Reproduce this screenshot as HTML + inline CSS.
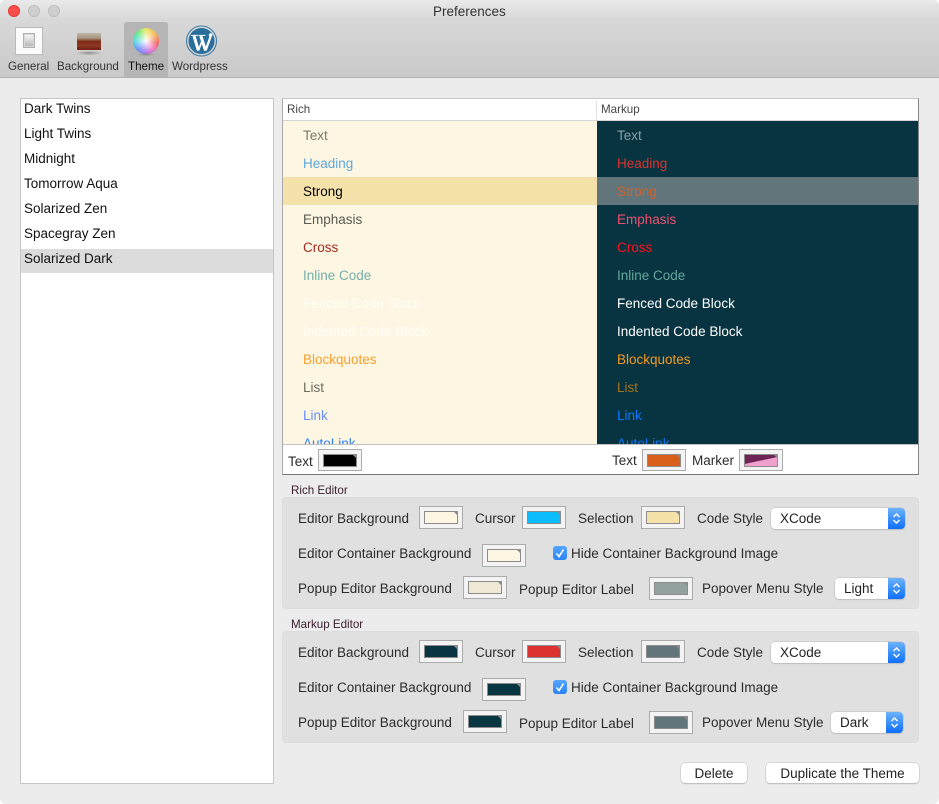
<!DOCTYPE html>
<html><head><meta charset="utf-8"><style>
*{box-sizing:border-box}
html,body{margin:0;padding:0;width:939px;height:804px;overflow:hidden;background:#fff}
body{font-family:"Liberation Sans",sans-serif;font-size:13.5px;color:#2b2b2b;position:relative}
#win{position:absolute;inset:0;background:#ececec;border-radius:5px 5px 6px 6px;overflow:hidden}
.t{position:absolute;white-space:nowrap;line-height:16px;margin-top:1px}
.t.n{margin-top:0}
.s{font-size:11.6px}
.a{position:absolute}
.sw{position:absolute;width:44px;height:23px;border:1px solid #ababab;background:#f3f3f3}
.sw i{position:absolute;left:4px;top:4px;width:34px;height:13px;border:1px solid #8c8c8c;display:block;overflow:hidden}
.sw i:after{content:"";position:absolute;right:-1px;top:-1px;border-style:solid;border-width:0 5px 5px 0;border-color:transparent #8c8c8c transparent transparent}
.grp{position:absolute;left:282px;width:637px;height:112px;background:#e0e0e0;border:1px solid #dcdcdc;border-radius:4px}
.sel{position:absolute;height:21px;background:#fff;border-radius:4px;box-shadow:0 0 0 .5px #bdbdbd,0 1px 1px #bbb;overflow:hidden;line-height:21px;padding-left:9px;color:#222}
.sel b{position:absolute;right:0;top:0;bottom:0;width:17px;background:linear-gradient(#6db3fb,#0f6ffb)}
.sel svg{position:absolute;right:3px;top:3px}
.btn{position:absolute;height:20px;background:#fff;border-radius:4px;box-shadow:0 0 0 .5px #c0c0c0,0 1px 1px #b5b5b5;text-align:center;line-height:21px;color:#222}
.cb{position:absolute;width:14px;height:14px;border-radius:3px;background:linear-gradient(#55a5fb,#2a84f8)}
.li{left:24px;color:#111}
</style></head><body><div id="win">

<div class="a" style="left:0;top:0;width:939px;height:78px;background:linear-gradient(#e9e9e9,#d8d8d8 20px,#c9c9c9);border-bottom:1px solid #b1b1b1"></div>
<div class="a" style="left:8px;top:5px;width:12px;height:12px;border-radius:50%;background:#fc4e4a;border:.5px solid #e03c38"></div>
<div class="a" style="left:28px;top:5px;width:12px;height:12px;border-radius:50%;background:#cfcfcf;border:.5px solid #bdbdbd"></div>
<div class="a" style="left:48px;top:5px;width:12px;height:12px;border-radius:50%;background:#cfcfcf;border:.5px solid #bdbdbd"></div>
<div class="t" style="left:433px;top:3px;color:#333">Preferences</div>

<div class="a" style="left:124px;top:22px;width:44px;height:55px;background:#b5b5b5;border-radius:3px 3px 0 0"></div>

<!-- General icon -->
<div class="a" style="left:15px;top:27px;width:28px;height:28px;background:#fbfbfb;border:1px solid #bababa"></div>
<div class="a" style="left:23px;top:33px;width:12px;height:15px;background:#d8d8d8;border:1px solid #b0b0b0"></div>
<div class="a" style="left:25px;top:35px;width:8px;height:11px;background:linear-gradient(#f6f6f6,#b8b8b8)"></div>
<!-- Background icon -->
<div class="a" style="left:76px;top:32px;width:26px;height:19px;background:linear-gradient(#bdb7a8 0,#a8957f 30%,#7d2a18 50%,#8f3a22 72%,#6e2014 100%);border:1px solid #d4d4d4"></div>
<div class="a" style="left:76px;top:51px;width:26px;height:4px;background:radial-gradient(ellipse,#8a8a8a,transparent 72%)"></div>
<!-- Theme icon -->
<div class="a" style="left:133px;top:28px;width:26px;height:26px;border-radius:50%;background:radial-gradient(circle,#fff 0,rgba(255,255,255,.6) 25%,rgba(255,255,255,0) 68%),conic-gradient(#e8e860,#f8a850 60deg,#f06060 100deg,#f070c0 140deg,#a070f0 185deg,#6090f8 225deg,#50d8e0 270deg,#60e880 315deg,#e8e860)"></div>
<div class="a" style="left:136px;top:53px;width:20px;height:3px;background:radial-gradient(ellipse,#888,transparent 70%)"></div>
<!-- Wordpress icon -->
<svg class="a" style="left:186px;top:25px" width="31" height="32" viewBox="0 0 31 32">
<circle cx="15.5" cy="16" r="15" fill="none" stroke="#3f7ea8" stroke-width="1.1"/>
<circle cx="15.5" cy="16" r="13" fill="#2a6f9c"/>
<g stroke="#fff" fill="none">
<path d="M8 11 12.4 25.5" stroke-width="3"/>
<path d="M12.4 25.5 16.5 15" stroke-width="1.7"/>
<path d="M14.8 11 19.6 25.5" stroke-width="3"/>
<path d="M19.6 25.5 24.6 11.5" stroke-width="2.2"/>
<path d="M5 10.4H12M12.5 10.4H19.5" stroke-width="1"/>
</g>
<circle cx="24.6" cy="10" r="1.8" fill="#fff"/>
</svg>

<div class="t s" style="left:8px;top:58px;color:#333">General</div>
<div class="t s" style="left:57px;top:58px;color:#333">Background</div>
<div class="t s" style="left:128px;top:58px;color:#111">Theme</div>
<div class="t s" style="left:172px;top:58px;color:#333">Wordpress</div>

<!-- List -->
<div class="a" style="left:20px;top:98px;width:254px;height:686px;background:#fff;border:1px solid #c6c6c6"></div>
<div class="a" style="left:21px;top:249px;width:252px;height:24px;background:#dcdcdc"></div>
<div class="t li" style="top:100px">Dark Twins</div>
<div class="t li" style="top:125px">Light Twins</div>
<div class="t li" style="top:150px">Midnight</div>
<div class="t li" style="top:175px">Tomorrow Aqua</div>
<div class="t li" style="top:200px">Solarized Zen</div>
<div class="t li" style="top:225px">Spacegray Zen</div>
<div class="t li" style="top:250px">Solarized Dark</div>

<!-- Table -->
<div class="a" style="left:282px;top:98px;width:637px;height:377px;background:#fff;border:1px solid #c8c8c8;border-bottom-color:#777;border-left-color:#aaa;border-right-color:#888"></div>
<div class="a" style="left:283px;top:120px;width:635px;height:1px;background:#d6d6d6"></div>
<div class="a" style="left:596px;top:101px;width:1px;height:18px;background:#e2e2e2"></div>
<div class="t s" style="left:287px;top:101px;color:#444">Rich</div>
<div class="t s" style="left:601px;top:101px;color:#444">Markup</div>

<div class="a" style="left:283px;top:121px;width:314px;height:323px;background:#fdf6e3;overflow:hidden">
<div class="a" style="left:0;top:56px;width:314px;height:28px;background:#f5e2ab"></div>
<div class="t" style="left:20px;top:6px;color:#7a7a68">Text</div>
<div class="t" style="left:20px;top:34px;color:#5ea8dc">Heading</div>
<div class="t" style="left:20px;top:62px;color:#000">Strong</div>
<div class="t" style="left:20px;top:90px;color:#5a5a52">Emphasis</div>
<div class="t" style="left:20px;top:118px;color:#a52a20">Cross</div>
<div class="t" style="left:20px;top:146px;color:#73b0aa">Inline Code</div>
<div class="t" style="left:20px;top:174px;color:#fffdf6">Fenced Code Block</div>
<div class="t" style="left:20px;top:202px;color:#fffdf6">Indented Code Block</div>
<div class="t" style="left:20px;top:230px;color:#f8a02c">Blockquotes</div>
<div class="t" style="left:20px;top:258px;color:#6c6c60">List</div>
<div class="t" style="left:20px;top:286px;color:#6a90f8">Link</div>
<div class="t" style="left:20px;top:314px;color:#2a80f5">AutoLink</div>
</div>
<div class="a" style="left:597px;top:121px;width:321px;height:323px;background:#073440;overflow:hidden">
<div class="a" style="left:0;top:56px;width:321px;height:28px;background:#62757b"></div>
<div class="t" style="left:20px;top:6px;color:#8aa0a6">Text</div>
<div class="t" style="left:20px;top:34px;color:#dc322f">Heading</div>
<div class="t" style="left:20px;top:62px;color:#d2622a">Strong</div>
<div class="t" style="left:20px;top:90px;color:#ee5070">Emphasis</div>
<div class="t" style="left:20px;top:118px;color:#fb1420">Cross</div>
<div class="t" style="left:20px;top:146px;color:#66a69e">Inline Code</div>
<div class="t" style="left:20px;top:174px;color:#fff">Fenced Code Block</div>
<div class="t" style="left:20px;top:202px;color:#fff">Indented Code Block</div>
<div class="t" style="left:20px;top:230px;color:#f59b1e">Blockquotes</div>
<div class="t" style="left:20px;top:258px;color:#a8741f">List</div>
<div class="t" style="left:20px;top:286px;color:#0f78f8">Link</div>
<div class="t" style="left:20px;top:314px;color:#0f78f8">AutoLink</div>
</div>
<div class="a" style="left:283px;top:444px;width:635px;height:1px;background:#c2c2c2"></div>

<div class="t n" style="left:288px;top:454px">Text</div>
<div class="sw" style="left:318px;top:449px;height:22px"><i style="background:#000"></i></div>
<div class="t n" style="left:612px;top:453px">Text</div>
<div class="sw" style="left:642px;top:449px;height:22px"><i style="background:#d9601a"></i></div>
<div class="t n" style="left:692px;top:453px">Marker</div>
<div class="sw" style="left:739px;top:449px;height:22px"><i style="background:linear-gradient(168deg,#6e2456 48%,#f0a0cc 52%)"></i></div>

<!-- Rich Editor -->
<div class="t s" style="left:291px;top:482px;color:#3a2030">Rich Editor</div>
<div class="grp" style="top:497px"></div>
<div class="t" style="left:298px;top:510px">Editor Background</div>
<div class="sw" style="left:419px;top:506px"><i style="background:#fdf6e3"></i></div>
<div class="t" style="left:475px;top:510px">Cursor</div>
<div class="sw" style="left:522px;top:506px"><i style="background:#0cbdfd"></i></div>
<div class="t" style="left:578px;top:510px">Selection</div>
<div class="sw" style="left:641px;top:506px"><i style="background:#f5e2ab"></i></div>
<div class="t" style="left:697px;top:510px">Code Style</div>
<div class="sel" style="left:771px;top:508px;width:134px">XCode<b></b><svg width="11" height="15" viewBox="0 0 11 15"><path d="M2.5 6 5.5 3l3 3M2.5 9l3 3 3-3" fill="none" stroke="#fff" stroke-width="1.4"/></svg></div>

<div class="t" style="left:298px;top:545px">Editor Container Background</div>
<div class="sw" style="left:482px;top:544px"><i style="background:#fdf6e3"></i></div>
<div class="cb" style="left:553px;top:546px"><svg width="14" height="14" viewBox="0 0 14 14"><path d="M3.5 7.5 6 10.5 10.5 3.5" fill="none" stroke="#fff" stroke-width="1.6"/></svg></div>
<div class="t" style="left:571px;top:545px">Hide Container Background Image</div>

<div class="t" style="left:298px;top:580px">Popup Editor Background</div>
<div class="sw" style="left:463px;top:576px"><i style="background:#eee8d5"></i></div>
<div class="t" style="left:519px;top:581px">Popup Editor Label</div>
<div class="sw" style="left:649px;top:577px"><i style="background:#93a1a1"></i></div>
<div class="t" style="left:702px;top:580px">Popover Menu Style</div>
<div class="sel" style="left:835px;top:578px;width:70px">Light<b></b><svg width="11" height="15" viewBox="0 0 11 15"><path d="M2.5 6 5.5 3l3 3M2.5 9l3 3 3-3" fill="none" stroke="#fff" stroke-width="1.4"/></svg></div>

<!-- Markup Editor -->
<div class="t s" style="left:291px;top:616px;color:#3a2030">Markup Editor</div>
<div class="grp" style="top:631px"></div>
<div class="t" style="left:298px;top:644px">Editor Background</div>
<div class="sw" style="left:419px;top:640px"><i style="background:#073642"></i></div>
<div class="t" style="left:475px;top:644px">Cursor</div>
<div class="sw" style="left:522px;top:640px"><i style="background:#dc322f"></i></div>
<div class="t" style="left:578px;top:644px">Selection</div>
<div class="sw" style="left:641px;top:640px"><i style="background:#62757b"></i></div>
<div class="t" style="left:697px;top:644px">Code Style</div>
<div class="sel" style="left:771px;top:642px;width:134px">XCode<b></b><svg width="11" height="15" viewBox="0 0 11 15"><path d="M2.5 6 5.5 3l3 3M2.5 9l3 3 3-3" fill="none" stroke="#fff" stroke-width="1.4"/></svg></div>

<div class="t" style="left:298px;top:679px">Editor Container Background</div>
<div class="sw" style="left:482px;top:678px"><i style="background:#073642"></i></div>
<div class="cb" style="left:553px;top:680px"><svg width="14" height="14" viewBox="0 0 14 14"><path d="M3.5 7.5 6 10.5 10.5 3.5" fill="none" stroke="#fff" stroke-width="1.6"/></svg></div>
<div class="t" style="left:571px;top:679px">Hide Container Background Image</div>

<div class="t" style="left:298px;top:714px">Popup Editor Background</div>
<div class="sw" style="left:463px;top:710px"><i style="background:#073642"></i></div>
<div class="t" style="left:519px;top:715px">Popup Editor Label</div>
<div class="sw" style="left:649px;top:711px"><i style="background:#62757b"></i></div>
<div class="t" style="left:702px;top:714px">Popover Menu Style</div>
<div class="sel" style="left:831px;top:712px;width:72px">Dark<b></b><svg width="11" height="15" viewBox="0 0 11 15"><path d="M2.5 6 5.5 3l3 3M2.5 9l3 3 3-3" fill="none" stroke="#fff" stroke-width="1.4"/></svg></div>

<div class="btn" style="left:681px;top:763px;width:66px">Delete</div>
<div class="btn" style="left:766px;top:763px;width:153px">Duplicate the Theme</div>

</div></body></html>
